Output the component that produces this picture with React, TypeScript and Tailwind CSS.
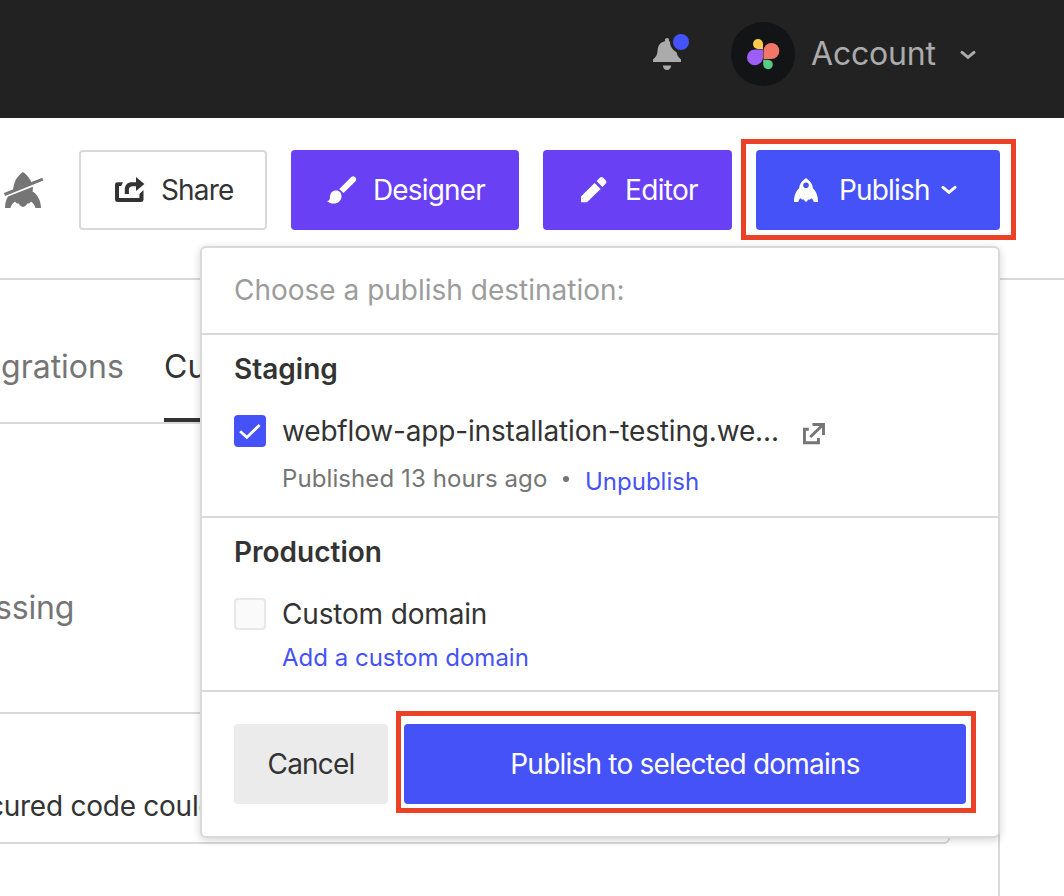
import React from "react";

function BellIcon() {
  return (
    <svg width="40" height="40" viewBox="0 0 40 40" className="block">
      <path
        d="M14 5c1.200 0 2 .7 2 1.800v1.400c5 .9 7.200 4.600 7.400 9.400.2 4.200 1.400 6.400 4.600 9v2.400H0v-2.400c3.200-2.600 4.400-4.800 4.600-9 .2-4.800 2.400-8.500 7.400-9.400V6.800C12 5.700 12.800 5 14 5z"
        fill="#ababab"
      />
      <path d="M9.800 32.500h8.400c-.3 2.700-1.800 4.500-4.200 4.500s-3.900-1.800-4.200-4.500z" fill="#ababab" />
      <circle cx="28" cy="9" r="11" fill="#222222" />
      <circle cx="28" cy="9" r="8" fill="#4353ff" />
    </svg>
  );
}

function Avatar() {
  return (
    <svg width="64" height="64" viewBox="0 0 64 64" className="block">
      <circle cx="32" cy="32" r="32" fill="#131416" />
      <path d="M32 27h-5a5 5 0 1 1 5-5z" fill="#ffcb4f" />
      <path d="M32.500 37v-8a7.900 8 0 1 1 7.900 8z" fill="#f27667" />
      <path d="M32 27.500v7.700a8 7.900 0 1 1-8-7.700z" fill="#9b5ef7" />
      <path d="M32.200 37.700h5a4.800 4.800 0 1 1-5 4.800z" fill="#58ca82" />
    </svg>
  );
}

function Chevron() {
  return (
    <svg width="16" height="10" viewBox="0 0 16 10" className="block">
      <path d="M2 2.400l6 4.900 6-4.900" fill="none" stroke="currentColor" strokeWidth="3" strokeLinecap="round" />
    </svg>
  );
}

function RocketOff() {
  return (
    <svg width="40" height="38" viewBox="0 0 40 38" className="block" fill="#757575">
      <path d="M19 0c4.500 3 7.600 7.600 8.800 11.400L9 18.700C9.500 10 13 4 19 0z" />
      <path d="M0 21L38.300 5.800l1 2.800L1 23.900z" />
      <path d="M4 24.600l25-9.900-.4 4.800c5 3 8.400 9.500 8.400 16.500h-5.500c-.6-2.600-2-4.700-4.500-6.500-1.200 1.700-2 2.300-3.700 1.900-1 2-2.300 3-4.300 3.700-2-.7-3.300-1.700-4.300-3.700-1.700.4-2.500-.2-3.700-1.900-2.500 1.800-3.900 3.900-4.500 6.500H1c0-4.500 1-8 3-11.400z" />
    </svg>
  );
}

function ShareIcon() {
  return (
    <svg width="30" height="26" viewBox="0 0 30 26" className="block">
      <path
        d="M8 5.200H2.500A2.500 2.500 0 0 0 0 7.700v15A2.500 2.500 0 0 0 2.500 25H26a2.500 2.500 0 0 0 2.500-2.300V13L24.400 17v4H4V9h2.200z"
        fill="#333333"
      />
      <path d="M9.800 17v-4.500c0-4.600 2.700-7.300 7.300-7.300H21V0l8.400 7L21 14V9.300h-3.400c-2.400 0-3.700 1.300-3.700 3.500V17z" fill="#333333" />
    </svg>
  );
}

function BrushIcon() {
  return (
    <svg width="30" height="28" viewBox="0 0 30 28" className="block" fill="#ffffff">
      <path d="M12.200 13L24.300 1a3 3 0 0 1 4.200 4.200L16.500 17z" />
      <path d="M0 25c2.200-.3 3-1.500 3-3.800C3 17 5.400 14.400 9 14.400c3.500 0 5.500 2.300 5.500 5.600 0 4.800-3.500 7.600-7.800 7.600C3.800 27.600 1.500 26.500 0 25z" />
    </svg>
  );
}

function PencilIcon() {
  return (
    <svg width="26" height="26" viewBox="0 0 26 26" className="block" fill="#ffffff">
      <path d="M0 19.600L13.600 6l6 6L6 25.200H0z" />
      <path d="M15.600 4l3-3a2.800 2.800 0 0 1 3.800 0l2 2a2.800 2.800 0 0 1 0 3.900l-3 3z" />
    </svg>
  );
}

function RocketIcon() {
  return (
    <svg width="24" height="24" viewBox="0 0 24 24" className="block">
      <path
        fillRule="evenodd"
        fill="#ffffff"
        d="M12 0c4 2.700 6.500 6 7 10.500 3 2.500 5 7 5 13.500h-4.300c-.2-1.500-.9-2.700-2.200-3.700-1 1.200-1.800 1.600-3.200 1.300-.5 1-1.200 1.700-2.300 2.400-1.100-.7-1.800-1.400-2.300-2.400-1.400.3-2.200-.1-3.200-1.300-1.300 1-2 2.200-2.200 3.700H0c0-6.500 2-11 5-13.500C5.500 6 8 2.700 12 0zm0 4.400a2.800 2.800 0 1 0 0 5.600 2.800 2.800 0 0 0 0-5.600z"
      />
    </svg>
  );
}

function ExternalIcon() {
  return (
    <svg width="22" height="22" viewBox="0 0 22 22" className="block" fill="none" stroke="#757575" strokeWidth="2.900">
      <path d="M5.800 6.200H1.450v13.500h14v-4.600" />
      <path d="M9.500 1.450h11v10.500M20 1.800L7.300 14" />
    </svg>
  );
}

function CheckIcon() {
  return (
    <svg width="32" height="32" viewBox="0 0 32 32" className="block">
      <path d="M7.200 17.200l5.600 5.200L24.600 11" fill="none" stroke="#ffffff" strokeWidth="2.800" strokeLinecap="square" />
    </svg>
  );
}

function Header() {
  return (
    <header className="flex h-[118px] bg-[#222222] pl-[653px] pt-[22px] text-[#ababab]">
      <div className="mt-[11px] w-[78px] shrink-0">
        <BellIcon />
      </div>
      <Avatar />
      <span className="ml-4 w-[149px] shrink-0 whitespace-nowrap text-[32px] leading-[64px] tracking-[-0.006em]">Account</span>
      <div className="mt-7">
        <Chevron />
      </div>
    </header>
  );
}

function Toolbar() {
  return (
    <div className="flex h-[162px] border-b-2 border-[#d9d9d9] pl-1 pt-8 text-[28px] leading-[80px] tracking-[-0.03em]">
      <div className="mt-[22px] w-[75px] shrink-0">
        <RocketOff />
      </div>
      <button className="flex h-20 w-[188px] shrink-0 items-center rounded-[4px] border-2 border-[#d9d9d9] pl-[34px] text-[#333333]">
        <ShareIcon />
        <span className="ml-4">Share</span>
      </button>
      <button className="ml-6 flex h-20 w-[228px] shrink-0 items-center rounded-[4px] bg-[#6a40f5] pl-9 text-white">
        <BrushIcon />
        <span className="ml-4">Designer</span>
      </button>
      <button className="ml-6 flex h-20 w-[189px] shrink-0 items-center rounded-[4px] bg-[#6a40f5] pl-[38px] text-white">
        <PencilIcon />
        <span className="ml-[18px] tracking-[-0.024em]">Editor</span>
      </button>
      <div className="relative ml-6 shrink-0">
        <button className="flex h-20 w-[244px] items-center rounded-[4px] bg-[#4552f7] pl-[38px] text-white">
          <RocketIcon />
          <span className="ml-[21px] w-[102px] whitespace-nowrap text-left">Publish</span>
          <Chevron />
        </button>
        <div className="pointer-events-none absolute -left-[15px] -top-[11px] h-[101px] w-[275px] border-[5px] border-[#eb4127]" />
      </div>
    </div>
  );
}

function Page() {
  return (
    <main className="h-[616px] w-[1000px] border-r-2 border-[#d9d9d9]">
      <nav className="flex h-36 border-b-2 border-[#d9d9d9] text-[32px] leading-[174px]">
        <span className="w-[164px] shrink-0 pl-px text-[#757575]">grations</span>
        <span className="h-[142px] whitespace-nowrap border-b-4 border-[#333333] text-[#333333]">Custom code</span>
      </nav>
      <div className="flex h-[288px] items-center text-[32px] text-[#757575]">
        <p className="-ml-[5px] mt-[79px] leading-10 tracking-[-0.005em]">ssing</p>
      </div>
      <div className="h-[132px] w-[950px] overflow-hidden rounded-br-[6px] border-y-2 border-r-2 border-[#d9d9d9]">
        <p className="-ml-[12px] mt-[72px] whitespace-nowrap text-[28px] leading-10 tracking-[-0.009em] text-[#333333]">cured code could</p>
      </div>
    </main>
  );
}

function PublishMenu() {
  return (
    <section className="absolute left-[200px] top-[246px] h-[592px] w-[800px] rounded-[6px] border-2 border-[#d9d9d9] bg-white text-[28px] text-[#333333] shadow-[0_2px_8px_rgba(0,0,0,0.18)]">
      <h2 className="h-[87px] border-b-2 border-[#d9d9d9] pl-8 leading-[84px] text-[#9c9c9c]">
        Choose a publish destination:
      </h2>
      <div className="h-[183px] border-b-2 border-[#d9d9d9] pl-8 pt-[14px]">
        <h3 className="font-semibold leading-10">Staging</h3>
        <div className="mt-[22px] flex h-10 items-center">
          <div className="h-8 w-8 shrink-0 rounded-[4px] bg-[#4552f7]">
            <CheckIcon />
          </div>
          <span className="ml-4 w-[521px] shrink-0 whitespace-nowrap tracking-[-0.006em]">webflow-app-installation-testing.we...</span>
          <div className="mt-[6px]">
            <ExternalIcon />
          </div>
        </div>
        <div className="ml-12 flex text-2xl leading-[56px] text-[#757575]">
          <span className="w-[281px] tracking-[0.004em]">Published 13 hours ago</span>
          <span className="mt-[25px] h-[6px] w-[6px] rounded-full bg-[#757575]" />
          <a className="ml-4 mt-[3px] text-[#4552f7]">Unpublish</a>
        </div>
      </div>
      <div className="h-[174px] border-b-2 border-[#d9d9d9] pl-8 pt-[14px]">
        <h3 className="font-semibold leading-10">Production</h3>
        <div className="mt-[22px] flex h-10 items-center">
          <div className="h-8 w-8 shrink-0 rounded-[4px] border-2 border-[#e8e8e8] bg-[#fafafa]" />
          <span className="ml-4 tracking-[-0.006em]">Custom domain</span>
        </div>
        <a className="ml-12 block text-2xl leading-[48px] text-[#4552f7]">Add a custom domain</a>
      </div>
      <div className="flex gap-4 px-8 pt-8 leading-[80px] tracking-[-0.03em]">
        <button className="h-20 w-[154px] shrink-0 rounded-[4px] bg-[#ebebeb]">Cancel</button>
        <div className="relative">
          <button className="h-20 w-[562px] rounded-[4px] bg-[#4552f7] tracking-[-0.028em] text-white">
            Publish to selected domains
          </button>
          <div className="pointer-events-none absolute -left-2 -top-[13px] h-[102px] w-[580px] border-[5px] border-[#eb4127]" />
        </div>
      </div>
    </section>
  );
}

export default function App() {
  return (
    <div className="relative h-[896px] w-[1064px] overflow-hidden bg-white font-['Inter',sans-serif]">
      <Header />
      <Toolbar />
      <Page />
      <PublishMenu />
    </div>
  );
}
